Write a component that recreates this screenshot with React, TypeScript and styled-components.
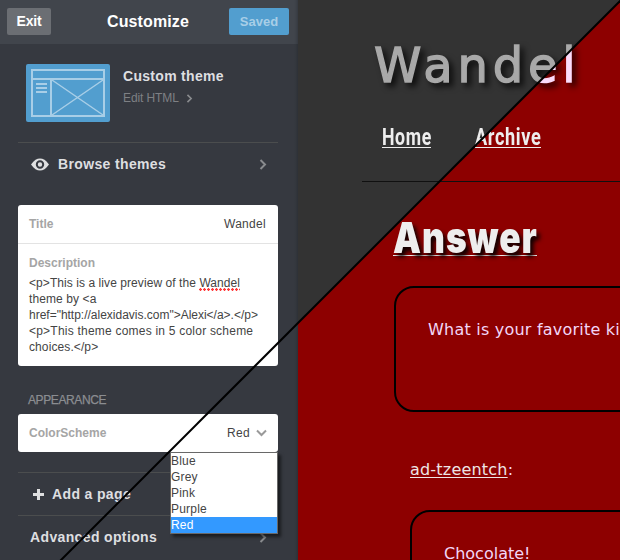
import React from "react";
import styled, { createGlobalStyle } from "styled-components";

const GlobalStyle = createGlobalStyle`
  * { box-sizing: border-box; }
  body { margin: 0; overflow: hidden; font-family: "Liberation Sans", Arial, sans-serif; }
`;

const Screen = styled.div`
  position: relative;
  display: flex;
  width: 620px;
  height: 560px;
  overflow: hidden;
  background: linear-gradient(135deg, #333333 439.1px, #8d0000 439.1px);
`;

const Sidebar = styled.aside`
  width: 298px;
  flex: none;
  display: flex;
  flex-direction: column;
  background: linear-gradient(to left, #2d3036 0, #33373d 2px, #363940 4px, #363940);
`;

const Header = styled.header`
  height: 44px;
  flex: none;
  display: flex;
  align-items: center;
  justify-content: space-between;
  padding: 0 9px 1px 7px;
  background: linear-gradient(to left, #353940 0, #3d4148 2px, #41454c 4px, #41454c);
`;

const HeaderButton = styled.button<{ $primary?: boolean }>`
  width: ${(p) => (p.$primary ? 60 : 44)}px;
  height: 27px;
  padding: 0;
  border: 0;
  border-radius: 2px;
  background: ${(p) => (p.$primary ? "#529ecf" : "#6b6e73")};
  color: ${(p) => (p.$primary ? "#a8cee7" : "#ffffff")};
  font: bold ${(p) => (p.$primary ? 13 : 14)}px/27px "Liberation Sans", Arial, sans-serif;
  letter-spacing: ${(p) => (p.$primary ? 0 : -0.2)}px;
`;

const HeaderTitle = styled.h1`
  margin: 0 0 0 16px;
  font-size: 16px;
  line-height: 20px;
  color: #ffffff;
  letter-spacing: 0.1px;
`;

const ThemeRow = styled.section`
  display: flex;
  gap: 13px;
  margin: 20px 0 20px 26px;
  height: 58px;
`;

const ThemeInfo = styled.div`
  padding-top: 4px;
`;

const ThemeName = styled.div`
  font: bold 14px/16px "Liberation Sans", Arial, sans-serif;
  letter-spacing: 0.3px;
  color: #dedfe0;
`;

const EditLink = styled.div`
  display: flex;
  align-items: center;
  gap: 7px;
  margin-top: 6px;
  font-size: 12px;
  line-height: 16px;
  letter-spacing: -0.1px;
  color: #7e8084;
`;

const MenuRow = styled.div<{ $indent: number }>`
  height: 43px;
  flex: none;
  display: flex;
  align-items: center;
  margin: 0 20px 0 18px;
  padding: 0 11px 0 ${(p) => p.$indent}px;
  border-top: 1px solid #4b4d4e;
  color: #dedfe0;
  font-size: 14px;
  font-weight: bold;
  letter-spacing: 0.36px;
`;

const BrowseRow = styled(MenuRow)`
  margin-bottom: 20px;
`;

const MenuLabel = styled.span<{ $gap?: number }>`
  flex: 1;
  margin-left: ${(p) => p.$gap ?? 0}px;
`;

const Card = styled.section`
  margin: 0 20px 0 18px;
  flex: none;
  border-radius: 3px;
  background: #ffffff;
  color: #444444;
  font-size: 12px;
`;

const SelectCard = styled(Card)`
  margin-bottom: 20px;
`;

const Field = styled.div`
  height: 38px;
  display: flex;
  align-items: center;
  padding: 0 11px;
`;

const FieldLabel = styled.div`
  flex: 1;
  font-weight: bold;
  color: #a5a5a5;
`;

const FieldValue = styled.span`
  margin-right: 1px;
  letter-spacing: 0.3px;
`;

const SelectValue = styled.div`
  display: flex;
  align-items: center;
  gap: 6px;
  letter-spacing: 0.3px;
`;

const DescriptionField = styled.div`
  height: 123px;
  padding: 11px 0 0 11px;
  border-top: 1px solid #e3e3e3;
  line-height: 16px;
`;

const DescriptionBody = styled.div`
  margin-top: 4px;
`;

const DescriptionLine = styled.div<{ $spacing?: number }>`
  white-space: nowrap;
  letter-spacing: ${(p) => p.$spacing ?? 0.1}px;
`;

const Misspelled = styled.span`
  background: radial-gradient(circle at 1.5px 1.5px, #ff3838 1.1px, transparent 1.5px) 0 100% / 4px 3px repeat-x;
  padding-bottom: 1px;
`;

const SectionLabel = styled.h2`
  margin: 26px 0 6px 28px;
  height: 16px;
  flex: none;
  font: normal 12px/16px "Liberation Sans", Arial, sans-serif;
  letter-spacing: -0.4px;
  -webkit-text-stroke: 0.25px #8b8d91;
  color: #8b8d91;
`;

const Preview = styled.main`
  flex: 1;
  min-width: 0;
  overflow: hidden;
  color: #f2d6f7;
  font: 16px/20px "DejaVu Sans", Verdana, sans-serif;
`;

const SiteTitle = styled.h1`
  width: 230px;
  margin: 36px 0 0 76px;
  font: normal 48px/58px "DejaVu Sans", Verdana, sans-serif;
  letter-spacing: 4.8px;
  color: transparent;
  -webkit-text-stroke: 1.4px transparent;
  background: linear-gradient(135deg, #a9a9a9 149.2px, #fbdcfb 149.2px);
  background-clip: text;
  -webkit-background-clip: text;
  filter: drop-shadow(4px 4px 3px rgba(0, 0, 0, 0.75));
`;

const Nav = styled.nav`
  display: flex;
  height: 24px;
  margin: 31px 0 32px 84px;
`;

const NavLink = styled.a<{ $width: number }>`
  width: ${(p) => p.$width}px;
  height: 23px;
  margin-right: 44px;
  border-bottom: 1px solid #eeeeee;
  color: #eeeeee;
  font: bold 23px/25px "Roboto", sans-serif;
  white-space: nowrap;
`;

const Condensed = styled.span<{ $scale: number; $spacing?: number }>`
  display: inline-block;
  transform: scaleX(${(p) => p.$scale});
  transform-origin: 0 0;
  letter-spacing: ${(p) => p.$spacing ?? 0}px;
`;

const Divider = styled.hr`
  height: 1px;
  margin: 0 0 0 64px;
  border: 0;
  background: #101010;
`;

const PostTitle = styled.h2`
  width: 144px;
  height: 40px;
  margin: 34px 0 30px 95px;
  border-bottom: 1px solid #eeeeee;
  color: #eeeeee;
  font: 900 43px/43px "Inter", sans-serif;
  text-shadow: 4px 4px 5px rgba(0, 0, 0, 0.9);
  white-space: nowrap;
`;

const Bubble = styled.div<{ $left: number; $height: number; $spacing?: number }>`
  height: ${(p) => p.$height}px;
  margin: 0 -40px 0 ${(p) => p.$left}px;
  padding: 32px 0 0 32px;
  border: 2px solid #000000;
  border-radius: 20px;
  letter-spacing: ${(p) => p.$spacing ?? 0}px;
  white-space: nowrap;
`;

const Asker = styled.div`
  margin: 48px 0 30px 112px;
  height: 20px;
  letter-spacing: 0.2px;
`;

const AskerName = styled.a`
  color: #eee5e5;
  text-decoration: underline;
  text-underline-offset: 2px;
`;

const Dropdown = styled.ul`
  position: absolute;
  left: 170px;
  top: 452px;
  width: 108px;
  height: 82px;
  margin: 0;
  padding: 0;
  list-style: none;
  border: 1px solid #686868;
  background: #ffffff;
  box-shadow: 3px 3px 3px rgba(0, 0, 0, 0.5);
`;

const Option = styled.li<{ $selected?: boolean }>`
  height: 16px;
  font-size: 12px;
  line-height: 16px;
  letter-spacing: 0.2px;
  color: ${(p) => (p.$selected ? "#ffffff" : "#444444")};
  background: ${(p) => (p.$selected ? "#3399ff" : "transparent")};
`;

const Slash = styled.svg`
  position: absolute;
  inset: 0;
  pointer-events: none;
`;

const Chevron = ({ small = false }: { small?: boolean }) => (
  <svg width={small ? 7 : 8} height={small ? 9 : 11} viewBox="0 0 8 11" fill="none" stroke="#898b8e" strokeWidth="2">
    <path d="M1.5 1L6 5.5L1.5 10" />
  </svg>
);

const ThemeThumb = () => (
  <svg width="84" height="58" viewBox="0 0 84 58">
    <rect width="84" height="58" rx="2" fill="#529ecf" />
    <g fill="none" stroke="#a8cee7" strokeWidth="2">
      <path d="M6 6H78V52H6ZM6 15H78M25 15V52" />
      <path d="M26 16L77 51M77 16L26 51" strokeWidth="1.5" />
      <path d="M10 20H21M10 24H21M10 28H21" />
    </g>
  </svg>
);

const Eye = () => (
  <svg width="18" height="13" viewBox="0 0 18 13">
    <path d="M0 6.5C3 2 6 .4 9 .4S15 2 18 6.5C15 11 12 12.6 9 12.6S3 11 0 6.5Z" fill="#dedfe0" />
    <circle cx="9" cy="6.5" r="3.2" fill="none" stroke="#363940" strokeWidth="2" />
  </svg>
);

const options = ["Blue", "Grey", "Pink", "Purple", "Red"];

export default function App() {
  return (
    <>
      <GlobalStyle />
      <Screen>
        <Sidebar>
          <Header>
            <HeaderButton>Exit</HeaderButton>
            <HeaderTitle>Customize</HeaderTitle>
            <HeaderButton $primary>Saved</HeaderButton>
          </Header>
          <ThemeRow>
            <ThemeThumb />
            <ThemeInfo>
              <ThemeName>Custom theme</ThemeName>
              <EditLink>Edit HTML <Chevron small /></EditLink>
            </ThemeInfo>
          </ThemeRow>
          <BrowseRow $indent={13}>
            <Eye />
            <MenuLabel $gap={9}>Browse themes</MenuLabel>
            <Chevron />
          </BrowseRow>
          <Card>
            <Field>
              <FieldLabel>Title</FieldLabel>
              <FieldValue>Wandel</FieldValue>
            </Field>
            <DescriptionField>
              <FieldLabel>Description</FieldLabel>
              <DescriptionBody>
                <DescriptionLine $spacing={0.07}>&lt;p&gt;This is a live preview of the <Misspelled>Wandel</Misspelled></DescriptionLine>
                <DescriptionLine>theme by &lt;a</DescriptionLine>
                <DescriptionLine $spacing={-0.01}>href="http://alexidavis.com"&gt;Alexi&lt;/a&gt;.&lt;/p&gt;</DescriptionLine>
                <DescriptionLine $spacing={0.22}>&lt;p&gt;This theme comes in 5 color scheme</DescriptionLine>
                <DescriptionLine>choices.&lt;/p&gt;</DescriptionLine>
              </DescriptionBody>
            </DescriptionField>
          </Card>
          <SectionLabel>APPEARANCE</SectionLabel>
          <SelectCard>
            <Field>
              <FieldLabel>ColorScheme</FieldLabel>
              <SelectValue>
                Red
                <svg width="11" height="8" viewBox="0 0 11 8" fill="none" stroke="#999999" strokeWidth="2">
                  <path d="M1 1.5L5.5 6L10 1.5" />
                </svg>
              </SelectValue>
            </Field>
          </SelectCard>
          <MenuRow $indent={15}>
            <svg width="11" height="11" viewBox="0 0 11 11" fill="#dedfe0">
              <path d="M4 0H7V4H11V7H7V11H4V7H0V4H4Z" />
            </svg>
            <MenuLabel $gap={8}>Add a page</MenuLabel>
          </MenuRow>
          <MenuRow $indent={12}>
            <MenuLabel>Advanced options</MenuLabel>
            <Chevron />
          </MenuRow>
        </Sidebar>
        <Preview>
          <SiteTitle>Wandel</SiteTitle>
          <Nav>
            <NavLink $width={49}><Condensed $scale={0.77} $spacing={0.8}>Home</Condensed></NavLink>
            <NavLink $width={66}><Condensed $scale={0.79} $spacing={0.8}>Archive</Condensed></NavLink>
          </Nav>
          <Divider />
          <PostTitle><Condensed $scale={0.82} $spacing={1.2}>Answer</Condensed></PostTitle>
          <Bubble $left={96} $height={126} $spacing={0.22}>What is your favorite ki</Bubble>
          <Asker><AskerName>ad-tzeentch</AskerName>:</Asker>
          <Bubble $left={112} $height={100}>Chocolate!</Bubble>
        </Preview>
        <Slash width="620" height="560" viewBox="0 0 620 560">
          <path d="M622 -1L60 561" stroke="#000000" strokeWidth="2" />
        </Slash>
        <Dropdown>
          {options.map((name) => (
            <Option key={name} $selected={name === "Red"}>{name}</Option>
          ))}
        </Dropdown>
      </Screen>
    </>
  );
}
